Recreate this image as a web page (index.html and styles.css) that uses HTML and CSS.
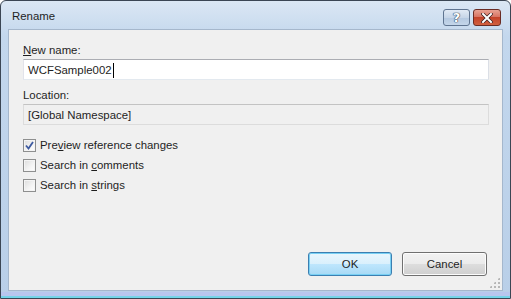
FILE: index.html
```html
<!DOCTYPE html>
<html lang="en">
<head>
    <meta charset="UTF-8">
    <meta name="viewport" content="width=device-width, initial-scale=1.0">
    <title>Rename</title>
    <link rel="stylesheet" href="styles.css">
</head>
<body>

    <div class="window">
        <div class="title-bar">
            <span class="title">Rename</span>
            <div class="caption-buttons">
                <button class="caption-btn help-btn">?</button>
                <button class="caption-btn close-btn">
                    <svg width="12" height="10" viewBox="0 0 12 10">
                        <path d="M2 1 L10 9 M10 1 L2 9" stroke="#3a1f1f" stroke-width="3.4" stroke-linecap="square"/>
                        <path d="M2 1 L10 9 M10 1 L2 9" stroke="#ffffff" stroke-width="2" stroke-linecap="square"/>
                    </svg>
                </button>
            </div>
        </div>

        <div class="client">
            <form class="rename-form">
                <div class="form-group">
                    <label for="newName"><u>N</u>ew name:</label>
                    <div class="text-box"><span>WCFSample002</span><span class="caret"></span></div>
                </div>

                <div class="form-group">
                    <label>Location:</label>
                    <div class="text-box read-only">[Global Namespace]</div>
                </div>

                <div class="options">
                    <label class="check-row"><span class="check checked">
                        <svg width="9" height="9" viewBox="0 0 9 9"><path d="M1 4.5 L3.5 7.5 L8 1" fill="none" stroke="#3d5aa0" stroke-width="1.8"/></svg>
                    </span><span>Pre<u>v</u>iew reference changes</span></label>
                    <label class="check-row"><span class="check"></span><span>Search in <u>c</u>omments</span></label>
                    <label class="check-row"><span class="check"></span><span>Search in <u>s</u>trings</span></label>
                </div>
            </form>

            <div class="dialog-buttons">
                <button class="dlg-btn default">OK</button>
                <button class="dlg-btn">Cancel</button>
            </div>
            <div class="size-grip"></div>
        </div>
    </div>

</body>
</html>
```

FILE: styles.css
```css
*, *::before, *::after {
    box-sizing: border-box;
    margin: 0;
    padding: 0;
}

html, body {
    width: 511px;
    height: 299px;
    overflow: hidden;
    background: #ffffff;
    font-family: "Liberation Sans", Arial, sans-serif;
    font-size: 11.4px;
    color: #1e1e1e;
}

.window {
    width: 511px;
    height: 299px;
    border: 1px solid #3b4654;
    border-radius: 6px 6px 0 0;
    background: linear-gradient(180deg, #dbe7f4 0%, #c3d7ed 12%, #b9cfe8 100%);
    display: flex;
    flex-direction: column;
    padding: 0 7px 7px 7px;
    box-shadow: inset 0 -2px 0 #74d4e8, inset 0 -6px 0 #b8c6ee;
}

.title-bar {
    height: 28px;
    display: flex;
    align-items: flex-start;
    justify-content: space-between;
}

.title {
    padding: 9px 0 0 4px;
    color: #1e1e1e;
}

.caption-buttons {
    display: flex;
    gap: 3px;
    margin-top: 8px;
    margin-right: 2px;
}

.caption-btn {
    height: 17px;
    border: 1px solid #5f7490;
    border-radius: 3px;
    display: flex;
    align-items: center;
    justify-content: center;
    font-family: "DejaVu Sans", sans-serif;
    cursor: default;
}

.help-btn {
    width: 27px;
    background: linear-gradient(180deg, #e1eaf5 0%, #c7d6e8 50%, #b4c8e0 51%, #c4d6ea 100%);
    color: #ffffff;
    font-size: 13px;
    font-weight: bold;
    text-shadow: 0 0 1px #2c3e58, 0 0 1px #2c3e58, 0 0 1px #2c3e58;
    line-height: 15px;
}

.close-btn {
    width: 28px;
    border-color: #6a2c24;
    background: linear-gradient(180deg, #e8a293 0%, #d87563 45%, #c4432a 50%, #d0603f 100%);
}

.client {
    flex: 1;
    background: #f0f0f0;
    border: 1px solid #a5b7cc;
    display: flex;
    flex-direction: column;
    padding: 12px 14px 14px 14px;
    position: relative;
}

.rename-form {
    display: flex;
    flex-direction: column;
    gap: 7px;
}

.form-group {
    display: flex;
    flex-direction: column;
    gap: 1px;
}

.form-group label {
    line-height: 16px;
}

.text-box {
    height: 21px;
    width: 466px;
    border: 1px solid #abadb3;
    border-left-color: #e2e3ea;
    border-right-color: #dbdfe6;
    border-bottom-color: #e3e9ef;
    background: #ffffff;
    padding: 1px 0 0 4px;
    line-height: 17px;
    display: flex;
    align-items: center;
}

.text-box.read-only {
    background: #f0f0f0;
    border-color: #c3c3c3 #dcdcdc #dcdcdc #dcdcdc;
}

.caret {
    display: inline-block;
    width: 1px;
    height: 15px;
    background: #000000;
    margin-left: 1px;
}

.options {
    display: flex;
    flex-direction: column;
    gap: 4px;
    margin-top: 5px;
}

.check-row {
    display: flex;
    align-items: center;
    gap: 4px;
    line-height: 16px;
}

.check {
    width: 13px;
    height: 13px;
    border: 1px solid #8e8f8f;
    background: linear-gradient(135deg, #dcdcdc 0%, #f4f4f4 60%, #ffffff 100%);
    box-shadow: inset 0 0 0 1px #f4f4f4;
    display: flex;
    align-items: center;
    justify-content: center;
}

.dialog-buttons {
    margin-top: auto;
    display: flex;
    justify-content: flex-end;
    gap: 10px;
    padding-right: 1px;
}

.dlg-btn {
    width: 85px;
    height: 24px;
    border: 1px solid #707070;
    border-radius: 3px;
    font-family: inherit;
    font-size: inherit;
    color: #1e1e1e;
    background: linear-gradient(180deg, #f2f2f2 0%, #ebebeb 50%, #dddddd 51%, #cfcfcf 100%);
    box-shadow: inset 0 0 0 1px #fcfcfc;
    cursor: default;
}

.dlg-btn.default {
    width: 84px;
    border-color: #3c7fb1;
    background: linear-gradient(180deg, #eaf6fd 0%, #d9f0fc 50%, #bee6fd 51%, #a7d9f5 100%);
    box-shadow: inset 0 0 0 1px #78d0f4;
}

.size-grip {
    position: absolute;
    right: 2px;
    bottom: 2px;
    width: 11px;
    height: 11px;
    background-image: radial-gradient(circle, #b7b7b7 1px, transparent 1.2px);
    background-size: 4px 4px;
    clip-path: polygon(100% 0, 100% 100%, 0 100%);
}
```
